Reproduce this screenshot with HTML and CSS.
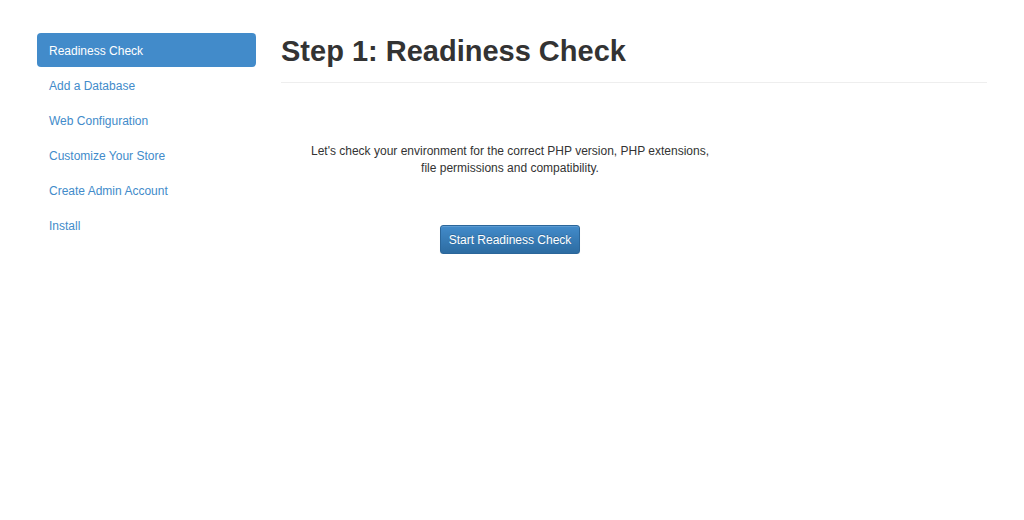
FILE: index.html
```html
<!DOCTYPE html>
<html lang="en">
<head>
<meta charset="utf-8">
<title>Step 1: Readiness Check</title>
<link rel="stylesheet" href="styles.css">
</head>
<body>
<div class="page">
  <nav class="sidebar">
    <ul class="nav">
      <li class="nav-item active"><a href="#">Readiness Check</a></li>
      <li class="nav-item"><a href="#">Add a Database</a></li>
      <li class="nav-item"><a href="#">Web Configuration</a></li>
      <li class="nav-item"><a href="#">Customize Your Store</a></li>
      <li class="nav-item"><a href="#">Create Admin Account</a></li>
      <li class="nav-item"><a href="#">Install</a></li>
    </ul>
  </nav>
  <main class="main">
    <h1 class="title">Step 1: Readiness Check</h1>
    <hr class="divider">
    <div class="intro">
      <p class="intro-text">Let's check your environment for the correct PHP version, PHP extensions,<br>file permissions and compatibility.</p>
      <button class="btn-primary" type="button">Start Readiness Check</button>
    </div>
  </main>
</div>
</body>
</html>
```

FILE: styles.css
```css
html, body {
  margin: 0;
  padding: 0;
  background: #fff;
}
body {
  font-family: "Liberation Sans", Arial, Helvetica, sans-serif;
  font-size: 12px;
  line-height: 17px;
  color: #333;
}
.page {
  display: flex;
  gap: 25px;
  padding: 33px 0 0 37px;
}
.sidebar {
  width: 219px;
  flex: none;
}
.nav {
  list-style: none;
  margin: 0;
  padding: 0;
  display: flex;
  flex-direction: column;
  gap: 1px;
}
.nav-item a {
  display: block;
  padding: 9px 12px 7px;
  line-height: 18px;
  border-radius: 4px;
  color: #428bca;
  text-decoration: none;
}
.nav-item.active a {
  background: #428bca;
  color: #fff;
}
.main {
  width: 706px;
  flex: none;
}
.title {
  margin: 0;
  padding-top: 2px;
  font-size: 29px;
  line-height: 32px;
  font-weight: bold;
  color: #333;
}
.divider {
  margin: 15px 0 0;
  border: 0;
  border-top: 1px solid #eeeeee;
  height: 0;
}
.intro {
  width: 458px;
  text-align: center;
  padding-top: 60px;
}
.intro-text {
  margin: 0 0 48px;
}
.btn-primary {
  font-family: inherit;
  font-size: 12px;
  line-height: 16px;
  padding: 6px 8px 5px;
  color: #fff;
  background-image: linear-gradient(to bottom, #428bca 0%, #2d6ca2 100%);
  border: 1px solid #2b669a;
  border-radius: 3px;
  box-shadow: inset 0 1px 0 rgba(255,255,255,.15), 0 1px 1px rgba(0,0,0,.075);
  text-shadow: 0 -1px 0 rgba(0,0,0,.2);
  cursor: pointer;
}
```
